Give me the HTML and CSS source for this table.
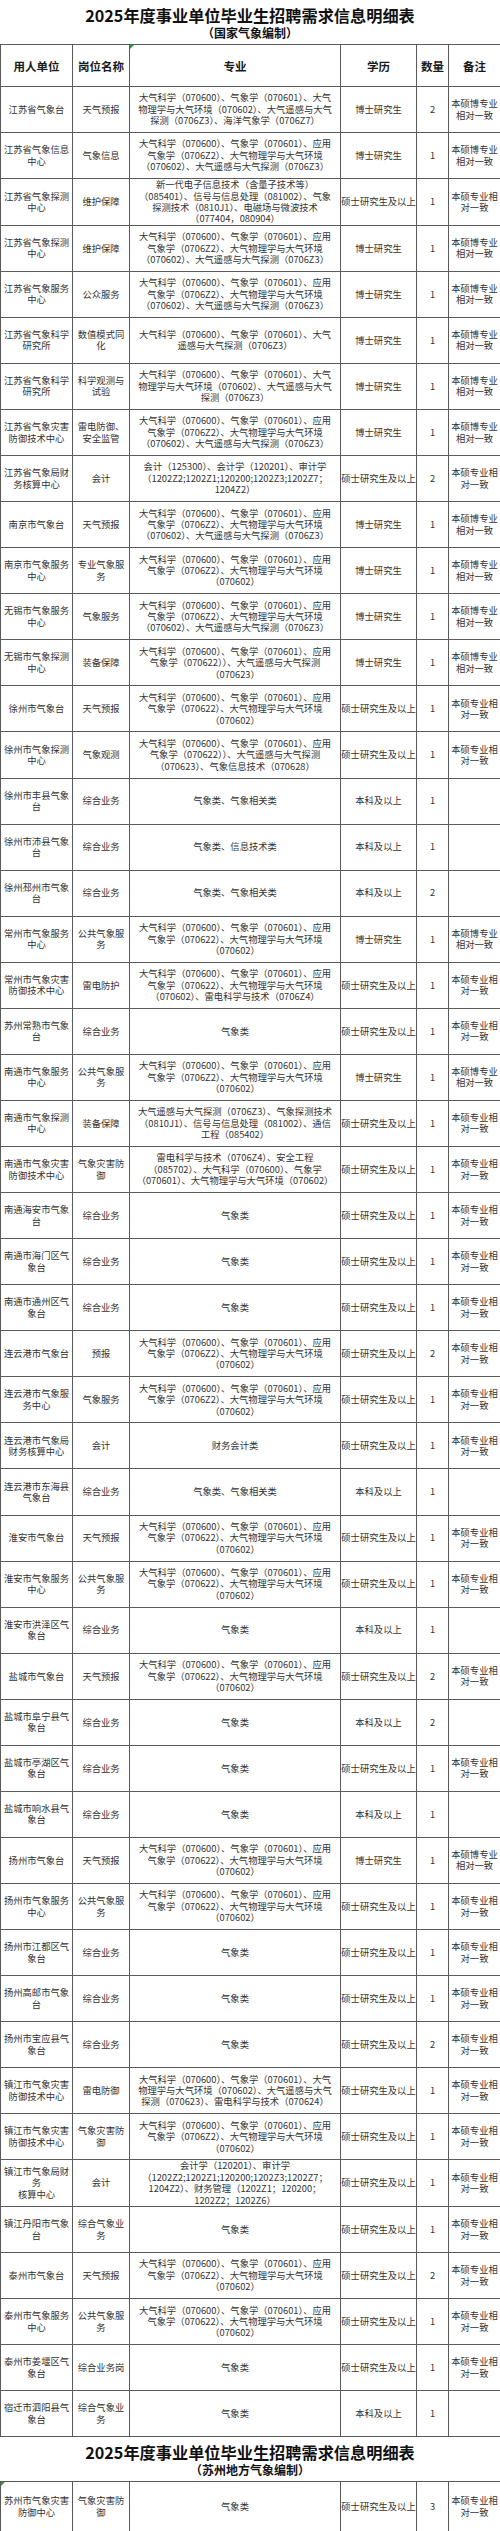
FILE: index.html
```html
<!DOCTYPE html>
<html lang="zh-CN">
<head>
<meta charset="utf-8">
<title>2025年度事业单位毕业生招聘需求信息明细表</title>
<link rel="stylesheet" href="styles.css">
</head>
<body>
<div class="sheet-title">
  <h1>2025年度事业单位毕业生招聘需求信息明细表</h1>
  <h2>（国家气象编制）</h2>
</div>
<table class="grid">
  <colgroup>
    <col class="c-unit"><col class="c-post"><col class="c-major"><col class="c-edu"><col class="c-num"><col class="c-note">
  </colgroup>
  <thead>
    <tr class="head">
      <th>用人单位</th><th>岗位名称</th><th class="flag">专业</th><th>学历</th><th>数量</th><th>备注</th>
    </tr>
  </thead>
  <tbody>
    <tr><td>江苏省气象台</td><td>天气预报</td><td class="major">大气科学（070600）、气象学（070601）、大气<br>物理学与大气环境（070602）、大气遥感与大气<br>探测（0706Z3）、海洋气象学（0706Z7）</td><td class="edu">博士研究生</td><td>2</td><td>本硕博专业相对一致</td></tr>
    <tr><td>江苏省气象信息中心</td><td>气象信息</td><td class="major">大气科学（070600）、气象学（070601）、应用<br>气象学（0706Z2）、大气物理学与大气环境<br>（070602）、大气遥感与大气探测（0706Z3）</td><td class="edu">博士研究生</td><td>1</td><td>本硕博专业相对一致</td></tr>
    <tr><td>江苏省气象探测中心</td><td>维护保障</td><td class="major">新一代电子信息技术（含量子技术等）<br>（085401）、信号与信息处理（081002）、气象<br>探测技术（0810J1）、电磁场与微波技术<br>（077404，080904）</td><td class="edu">硕士研究生及以上</td><td>1</td><td>本硕专业相对一致</td></tr>
    <tr><td>江苏省气象探测中心</td><td>维护保障</td><td class="major">大气科学（070600）、气象学（070601）、应用<br>气象学（0706Z2）、大气物理学与大气环境<br>（070602）、大气遥感与大气探测（0706Z3）</td><td class="edu">博士研究生</td><td>1</td><td>本硕博专业相对一致</td></tr>
    <tr><td>江苏省气象服务中心</td><td>公众服务</td><td class="major">大气科学（070600）、气象学（070601）、应用<br>气象学（0706Z2）、大气物理学与大气环境<br>（070602）、大气遥感与大气探测（0706Z3）</td><td class="edu">博士研究生</td><td>1</td><td>本硕博专业相对一致</td></tr>
    <tr><td>江苏省气象科学研究所</td><td>数值模式同化</td><td class="major">大气科学（070600）、气象学（070601）、大气<br>遥感与大气探测（0706Z3）</td><td class="edu">博士研究生</td><td>1</td><td>本硕博专业相对一致</td></tr>
    <tr><td>江苏省气象科学研究所</td><td>科学观测与试验</td><td class="major">大气科学（070600）、气象学（070601）、大气<br>物理学与大气环境（070602）、大气遥感与大气<br>探测（0706Z3）</td><td class="edu">博士研究生</td><td>1</td><td>本硕博专业相对一致</td></tr>
    <tr><td>江苏省气象灾害防御技术中心</td><td>雷电防御、安全监管</td><td class="major">大气科学（070600）、气象学（070601）、应用<br>气象学（0706Z2）、大气物理学与大气环境<br>（070602）、大气遥感与大气探测（0706Z3）</td><td class="edu">博士研究生</td><td>1</td><td>本硕博专业相对一致</td></tr>
    <tr><td>江苏省气象局财务核算中心</td><td>会计</td><td class="major">会计（125300）、会计学（120201）、审计学<br>（1202Z2;1202Z1;120200;1202Z3;1202Z7；<br>1204Z2）</td><td class="edu">硕士研究生及以上</td><td>2</td><td>本硕专业相对一致</td></tr>
    <tr><td>南京市气象台</td><td>天气预报</td><td class="major">大气科学（070600）、气象学（070601）、应用<br>气象学（0706Z2）、大气物理学与大气环境<br>（070602）、大气遥感与大气探测（0706Z3）</td><td class="edu">博士研究生</td><td>1</td><td>本硕博专业相对一致</td></tr>
    <tr><td>南京市气象服务中心</td><td>专业气象服务</td><td class="major">大气科学（070600）、气象学（070601）、应用<br>气象学（0706Z2）、大气物理学与大气环境<br>（070602）</td><td class="edu">博士研究生</td><td>1</td><td>本硕博专业相对一致</td></tr>
    <tr><td>无锡市气象服务中心</td><td>气象服务</td><td class="major">大气科学（070600）、气象学（070601）、应用<br>气象学（0706Z2）、大气物理学与大气环境<br>（070602）、大气遥感与大气探测（0706Z3）</td><td class="edu">博士研究生</td><td>1</td><td>本硕博专业相对一致</td></tr>
    <tr><td>无锡市气象探测中心</td><td>装备保障</td><td class="major">大气科学（070600）、气象学（070601）、应用<br>气象学（070622））、大气遥感与大气探测<br>（070623）</td><td class="edu">博士研究生</td><td>1</td><td>本硕博专业相对一致</td></tr>
    <tr><td>徐州市气象台</td><td>天气预报</td><td class="major">大气科学（070600）、气象学（070601）、应用<br>气象学（070622）、大气物理学与大气环境<br>（070602）</td><td class="edu">硕士研究生及以上</td><td>1</td><td>本硕专业相对一致</td></tr>
    <tr><td>徐州市气象探测中心</td><td>气象观测</td><td class="major">大气科学（070600）、气象学（070601）、应用<br>气象学（070622））、大气遥感与大气探测<br>（070623）、气象信息技术（070628）</td><td class="edu">硕士研究生及以上</td><td>1</td><td>本硕专业相对一致</td></tr>
    <tr><td>徐州市丰县气象台</td><td>综合业务</td><td class="major">气象类、气象相关类</td><td class="edu">本科及以上</td><td>1</td><td></td></tr>
    <tr><td>徐州市沛县气象台</td><td>综合业务</td><td class="major">气象类、信息技术类</td><td class="edu">本科及以上</td><td>1</td><td></td></tr>
    <tr><td>徐州邳州市气象台</td><td>综合业务</td><td class="major">气象类、气象相关类</td><td class="edu">本科及以上</td><td>2</td><td></td></tr>
    <tr><td>常州市气象服务中心</td><td>公共气象服务</td><td class="major">大气科学（070600）、气象学（070601）、应用<br>气象学（070622）、大气物理学与大气环境<br>（070602）</td><td class="edu">博士研究生</td><td>1</td><td>本硕博专业相对一致</td></tr>
    <tr><td>常州市气象灾害防御技术中心</td><td>雷电防护</td><td class="major">大气科学（070600）、气象学（070601）、应用<br>气象学（070622）、大气物理学与大气环境<br>（070602）、雷电科学与技术（0706Z4）</td><td class="edu">硕士研究生及以上</td><td>1</td><td>本硕专业相对一致</td></tr>
    <tr><td>苏州常熟市气象台</td><td>综合业务</td><td class="major">气象类</td><td class="edu">硕士研究生及以上</td><td>1</td><td>本硕专业相对一致</td></tr>
    <tr><td>南通市气象服务中心</td><td>公共气象服务</td><td class="major">大气科学（070600）、气象学（070601）、应用<br>气象学（0706Z2）、大气物理学与大气环境<br>（070602）</td><td class="edu">博士研究生</td><td>1</td><td>本硕博专业相对一致</td></tr>
    <tr><td>南通市气象探测中心</td><td>装备保障</td><td class="major">大气遥感与大气探测（0706Z3）、气象探测技术<br>（0810J1）、信号与信息处理（081002）、通信<br>工程（085402）</td><td class="edu">硕士研究生及以上</td><td>1</td><td>本硕专业相对一致</td></tr>
    <tr><td>南通市气象灾害防御技术中心</td><td>气象灾害防御</td><td class="major">雷电科学与技术（0706Z4）、安全工程<br>（085702）、大气科学（070600）、气象学<br>（070601）、大气物理学与大气环境（070602）</td><td class="edu">硕士研究生及以上</td><td>1</td><td>本硕专业相对一致</td></tr>
    <tr><td>南通海安市气象台</td><td>综合业务</td><td class="major">气象类</td><td class="edu">硕士研究生及以上</td><td>1</td><td>本硕专业相对一致</td></tr>
    <tr><td>南通市海门区气象台</td><td>综合业务</td><td class="major">气象类</td><td class="edu">硕士研究生及以上</td><td>1</td><td>本硕专业相对一致</td></tr>
    <tr><td>南通市通州区气象台</td><td>综合业务</td><td class="major">气象类</td><td class="edu">硕士研究生及以上</td><td>1</td><td>本硕专业相对一致</td></tr>
    <tr><td>连云港市气象台</td><td>预报</td><td class="major">大气科学（070600）、气象学（070601）、应用<br>气象学（0706Z2）、大气物理学与大气环境<br>（070602）</td><td class="edu">硕士研究生及以上</td><td>2</td><td>本硕专业相对一致</td></tr>
    <tr><td>连云港市气象服务中心</td><td>气象服务</td><td class="major">大气科学（070600）、气象学（070601）、应用<br>气象学（0706Z2）、大气物理学与大气环境<br>（070602）</td><td class="edu">硕士研究生及以上</td><td>1</td><td>本硕专业相对一致</td></tr>
    <tr><td>连云港市气象局财务核算中心</td><td>会计</td><td class="major">财务会计类</td><td class="edu">硕士研究生及以上</td><td>1</td><td>本硕专业相对一致</td></tr>
    <tr><td>连云港市东海县气象台</td><td>综合业务</td><td class="major">气象类、气象相关类</td><td class="edu">本科及以上</td><td>1</td><td></td></tr>
    <tr><td>淮安市气象台</td><td>天气预报</td><td class="major">大气科学（070600）、气象学（070601）、应用<br>气象学（070622）、大气物理学与大气环境<br>（070602）</td><td class="edu">硕士研究生及以上</td><td>1</td><td>本硕专业相对一致</td></tr>
    <tr><td>淮安市气象服务中心</td><td>公共气象服务</td><td class="major">大气科学（070600）、气象学（070601）、应用<br>气象学（070622）、大气物理学与大气环境<br>（070602）</td><td class="edu">硕士研究生及以上</td><td>1</td><td>本硕专业相对一致</td></tr>
    <tr><td>淮安市洪泽区气象台</td><td>综合业务</td><td class="major">气象类</td><td class="edu">本科及以上</td><td>1</td><td></td></tr>
    <tr><td>盐城市气象台</td><td>天气预报</td><td class="major">大气科学（070600）、气象学（070601）、应用<br>气象学（070622）、大气物理学与大气环境<br>（070602）</td><td class="edu">硕士研究生及以上</td><td>2</td><td>本硕专业相对一致</td></tr>
    <tr><td>盐城市阜宁县气象台</td><td>综合业务</td><td class="major">气象类</td><td class="edu">本科及以上</td><td>2</td><td></td></tr>
    <tr><td>盐城市亭湖区气象台</td><td>综合业务</td><td class="major">气象类</td><td class="edu">硕士研究生及以上</td><td>1</td><td>本硕专业相对一致</td></tr>
    <tr><td>盐城市响水县气象台</td><td>综合业务</td><td class="major">气象类</td><td class="edu">本科及以上</td><td>1</td><td></td></tr>
    <tr><td>扬州市气象台</td><td>天气预报</td><td class="major">大气科学（070600）、气象学（070601）、应用<br>气象学（070622）、大气物理学与大气环境<br>（070602）</td><td class="edu">博士研究生</td><td>1</td><td>本硕博专业相对一致</td></tr>
    <tr><td>扬州市气象服务中心</td><td>公共气象服务</td><td class="major">大气科学（070600）、气象学（070601）、应用<br>气象学（070622）、大气物理学与大气环境<br>（070602）</td><td class="edu">硕士研究生及以上</td><td>1</td><td>本硕专业相对一致</td></tr>
    <tr><td>扬州市江都区气象台</td><td>综合业务</td><td class="major">气象类</td><td class="edu">硕士研究生及以上</td><td>1</td><td>本硕专业相对一致</td></tr>
    <tr><td>扬州高邮市气象台</td><td>综合业务</td><td class="major">气象类</td><td class="edu">硕士研究生及以上</td><td>1</td><td>本硕专业相对一致</td></tr>
    <tr><td>扬州市宝应县气象台</td><td>综合业务</td><td class="major">气象类</td><td class="edu">硕士研究生及以上</td><td>2</td><td>本硕专业相对一致</td></tr>
    <tr><td>镇江市气象灾害防御技术中心</td><td>雷电防御</td><td class="major">大气科学（070600）、气象学（070601）、大气<br>物理学与大气环境（070602）、大气遥感与大气<br>探测（070623）、雷电科学与技术（070624）</td><td class="edu">硕士研究生及以上</td><td>1</td><td>本硕专业相对一致</td></tr>
    <tr><td>镇江市气象灾害防御技术中心</td><td>气象灾害防御</td><td class="major">大气科学（070600）、气象学（070601）、应用<br>气象学（0706Z2）、大气物理学与大气环境<br>（070602）</td><td class="edu">硕士研究生及以上</td><td>1</td><td>本硕专业相对一致</td></tr>
    <tr><td>镇江市气象局财务<br>核算中心</td><td>会计</td><td class="major">会计学（120201）、审计学<br>（1202Z2;1202Z1;120200;1202Z3;1202Z7；<br>1204Z2）、财务管理（1202Z1；120200；<br>1202Z2；1202Z6）</td><td class="edu">硕士研究生及以上</td><td>1</td><td>本硕专业相对一致</td></tr>
    <tr><td>镇江丹阳市气象台</td><td>综合气象业务</td><td class="major">气象类</td><td class="edu">硕士研究生及以上</td><td>1</td><td>本硕专业相对一致</td></tr>
    <tr><td>泰州市气象台</td><td>天气预报</td><td class="major">大气科学（070600）、气象学（070601）、应用<br>气象学（0706Z2）、大气物理学与大气环境<br>（070602）</td><td class="edu">硕士研究生及以上</td><td>2</td><td>本硕专业相对一致</td></tr>
    <tr><td>泰州市气象服务中心</td><td>公共气象服务</td><td class="major">大气科学（070600）、气象学（070601）、应用<br>气象学（070622）、大气物理学与大气环境<br>（070602）</td><td class="edu">硕士研究生及以上</td><td>1</td><td>本硕专业相对一致</td></tr>
    <tr><td>泰州市姜堰区气象台</td><td>综合业务岗</td><td class="major">气象类</td><td class="edu">硕士研究生及以上</td><td>1</td><td>本硕专业相对一致</td></tr>
    <tr><td>宿迁市泗阳县气象台</td><td>综合气象业务</td><td class="major">气象类</td><td class="edu">本科及以上</td><td>1</td><td></td></tr>
  </tbody>
</table>
<div class="sheet-title">
  <h1>2025年度事业单位毕业生招聘需求信息明细表</h1>
  <h2>（苏州地方气象编制）</h2>
</div>
<table class="grid">
  <colgroup>
    <col class="c-unit"><col class="c-post"><col class="c-major"><col class="c-edu"><col class="c-num"><col class="c-note">
  </colgroup>
  <tbody>
    <tr class="tall"><td class="flag">苏州市气象灾害防御中心</td><td>气象灾害防御</td><td class="major">气象类</td><td class="edu">硕士研究生及以上</td><td>3</td><td>本硕专业相对一致</td></tr>
  </tbody>
</table>
</body>
</html>
```

FILE: styles.css
```css
html, body {
  margin: 0;
  padding: 0;
  background: #ffffff;
}

body {
  width: 500px;
  font-family: "Noto Sans CJK SC", "Noto Sans", sans-serif;
  color: #333333;
}

.sheet-title {
  box-sizing: border-box;
  height: 44px;
  padding-top: 5px;
  text-align: center;
  color: #111111;
}

.sheet-title h1 {
  margin: 0;
  font-size: 16.2px;
  line-height: 20px;
  font-weight: 700;
}

.sheet-title h2 {
  margin: 0;
  font-size: 12px;
  line-height: 16px;
  font-weight: 700;
}

.grid {
  width: 500px;
  border-collapse: collapse;
  table-layout: fixed;
}

.c-unit { width: 72px; }
.c-post { width: 57px; }
.c-major { width: 211px; }
.c-edu { width: 76px; }
.c-num { width: 32px; }
.c-note { width: 52px; }

.grid th,
.grid td {
  border: 1px solid #5a5a5a;
  padding: 0 2px;
  text-align: center;
  vertical-align: middle;
  font-size: 9.3px;
  line-height: 11.4px;
  font-weight: 400;
  color: #333333;
  overflow: hidden;
}

.grid .head {
  height: 42px;
}

.grid .head th {
  font-size: 11.5px;
  line-height: 14px;
  font-weight: 700;
  color: #1a1a1a;
}

.grid tbody tr {
  height: 46.07px;
}

.grid tbody tr.tall {
  height: 50px;
}

.grid td.major {
  white-space: nowrap;
  padding: 0;
}

.grid td.edu {
  white-space: nowrap;
  padding: 0;
}

.flag {
  position: relative;
}

.flag::before {
  content: "";
  position: absolute;
  left: 0;
  top: 0;
  border-top: 4px solid #2e9e3a;
  border-right: 4px solid transparent;
}
```
